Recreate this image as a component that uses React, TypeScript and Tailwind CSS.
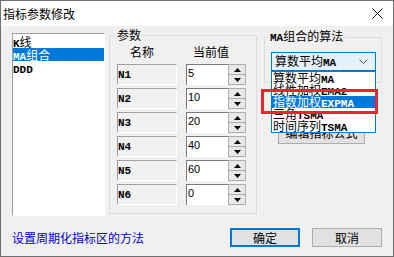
import { FC, ReactNode } from "react";

const Mono: FC<{ children: ReactNode }> = ({ children }) => (
  <span className="font-['Liberation_Mono',monospace] font-bold text-[11px]">
    {children}
  </span>
);

const params = [
  { name: "N1", value: "5" },
  { name: "N2", value: "10" },
  { name: "N3", value: "20" },
  { name: "N4", value: "40" },
  { name: "N5", value: "60" },
  { name: "N6", value: "0" },
];

const algos = [
  { cn: "算数平均", en: "MA", on: false },
  { cn: "线性加权", en: "EMA2", on: false },
  { cn: "指数加权", en: "EXPMA", on: true },
  { cn: "三角", en: "TSMA", on: false },
  { cn: "时间序列", en: "TSMA", on: false },
];

const Spin = () => (
  <div className="flex flex-col w-[18px] h-[21px]">
    <div className="flex-1 flex items-center justify-center border border-[#adadad] bg-[#e8e8e8]">
      <svg width="7" height="4" viewBox="0 0 7 4">
        <path d="M0 4 L3.5 0 L7 4Z" fill="#000" />
      </svg>
    </div>
    <div className="flex-1 flex items-center justify-center border border-t-0 border-[#adadad] bg-[#e8e8e8]">
      <svg width="7" height="4" viewBox="0 0 7 4">
        <path d="M0 0 L7 0 L3.5 4Z" fill="#000" />
      </svg>
    </div>
  </div>
);

export default function App() {
  return (
    <div className="w-[394px] h-[257px] border border-[#6e6e6e] flex flex-col bg-[#f0f0f0] text-[12px] leading-[12px] text-black font-['Noto_Sans_CJK_SC',sans-serif]">
      {/* title bar */}
      <div className="h-[25px] bg-white flex items-center justify-between pl-[2px] pr-[10px]">
        <span>指标参数修改</span>
        <svg width="11" height="11" viewBox="0 0 11 11">
          <path d="M0.5 0.5 L10.5 10.5 M10.5 0.5 L0.5 10.5" stroke="#111" strokeWidth="1" />
        </svg>
      </div>

      <div className="flex-1 flex flex-col">
        <div className="flex items-start pl-[11px] pt-[3px]">
          {/* indicator list */}
          <div className="mt-[4px] w-[93px] h-[183px] bg-white border border-t-[#a0a0a0] border-l-[#a0a0a0] border-r-white border-b-white pt-[1px]">
            <div className="h-[13px] leading-[13px]">
              <Mono>K</Mono>线
            </div>
            <div className="h-[13px] leading-[13px] bg-[#0078d7] text-white">
              <Mono>MA</Mono>组合
            </div>
            <div className="h-[13px] leading-[13px]">
              <Mono>DDD</Mono>
            </div>
          </div>

          {/* params group */}
          <fieldset className="ml-[4px] w-[148px] h-[185px] border border-[#dcdcdc]">
            <legend className="ml-[5px] px-[2px] leading-[12px]">参数</legend>
            <div className="flex mt-[5px] pl-[20px]">
              <span>名称</span>
              <span className="ml-[39px]">当前值</span>
            </div>
            <div className="flex flex-col gap-[3px] mt-[6px] pl-[7px]">
              {params.map((p) => (
                <div key={p.name} className="flex h-[21px]">
                  <div className="w-[60px] border border-t-[#a0a0a0] border-l-[#a0a0a0] border-r-white border-b-white pt-[3px] leading-[10px]">
                    <Mono>{p.name}</Mono>
                  </div>
                  <div className="ml-[9px] w-[42px] bg-white border-l border-t border-[#7a7a7a] pt-[3px] pl-[1px] leading-[11px] font-['Liberation_Sans',sans-serif] text-[11px]">
                    {p.value}
                  </div>
                  <Spin />
                </div>
              ))}
            </div>
          </fieldset>

          {/* algorithm group */}
          <div className="ml-[7px] mt-[1px] flex flex-col">
            <fieldset className="w-[118px] h-[53px] border border-[#dcdcdc]">
              <legend className="ml-[3px] px-[2px] leading-[12px]">
                <Mono>MA</Mono>组合的算法
              </legend>
              <div className="relative mt-[8px] ml-[6px] w-[105px]">
                <div className="h-[19px] flex items-center justify-between pl-[3px] pr-[7px] bg-[#e5f1fb] border border-[#0078d7]">
                  <span>
                    算数平均<Mono>MA</Mono>
                  </span>
                  <svg width="9" height="5" viewBox="0 0 9 5">
                    <path d="M0.5 0.5 L4.5 4.5 L8.5 0.5" fill="none" stroke="#555" strokeWidth="1" />
                  </svg>
                </div>
                {/* open dropdown */}
                <div className="absolute top-full left-0 w-[105px] z-10 bg-white border border-[#0078d7]">
                  {algos.map((a, i) => (
                    <div
                      key={i}
                      className={`relative h-[12px] leading-[12px] pl-[1px] text-[12px] whitespace-nowrap ${
                        a.on ? "bg-[#0078d7] text-white z-10" : "bg-white"
                      }`}
                    >
                      {a.cn}
                      <Mono>{a.en}</Mono>
                    </div>
                  ))}
                </div>
                <div className="absolute left-[-10px] top-[37px] w-[117px] h-[25px] border-[3px] border-[#e8262c] z-20" />
              </div>
            </fieldset>
            <button className="mt-[39px] ml-[14px] w-[87px] h-[22px] bg-[#e1e1e1] border border-[#adadad] leading-[12px]">
              编辑指标公式
            </button>
          </div>
        </div>

        {/* footer */}
        <div className="flex items-center mt-[12px] pl-[11px] pr-[11px]">
          <span className="text-[#0000cc]">设置周期化指标区的方法</span>
          <button className="ml-auto w-[70px] h-[19px] bg-[#e1e1e1] border-2 border-[#0078d7] leading-[12px]">
            确定
          </button>
          <button className="ml-[12px] w-[70px] h-[19px] bg-[#e1e1e1] border border-[#adadad] leading-[12px]">
            取消
          </button>
        </div>
      </div>
    </div>
  );
}
